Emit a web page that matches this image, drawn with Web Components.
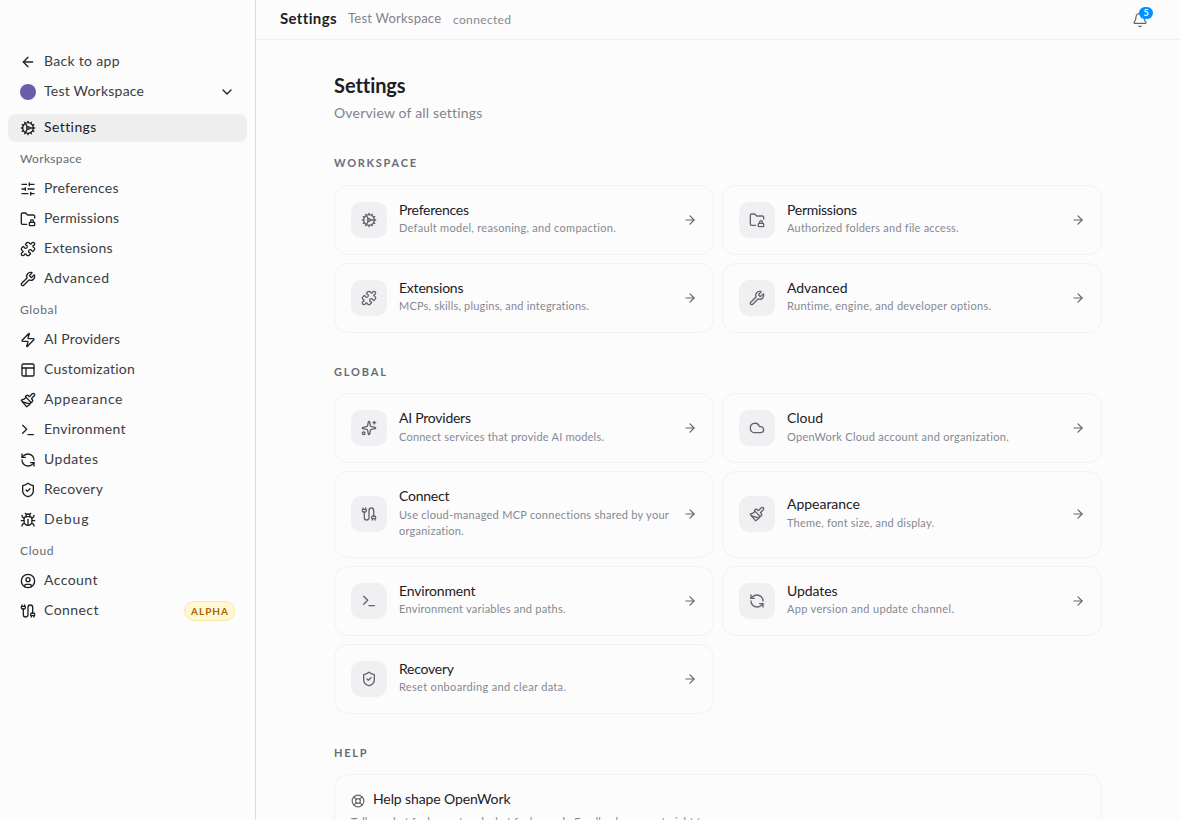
<!DOCTYPE html>
<html lang="en">
<head>
<meta charset="utf-8">
<title>Settings</title>
<style>
html,body{margin:0;height:100%;overflow:hidden;background:#fcfcfd}
body{font-family:Lato,"Open Sans",sans-serif;color:#1c2024;font-size:14px}
</style>
</head>
<body>
<settings-app></settings-app>
<script>
const P = d => d.split('|').map(x => `<path d="${x}"/>`).join('');
const C = (x, y, r) => `<circle cx="${x}" cy="${y}" r="${r}"/>`;
const ICONS = {
  left: P('m12 19-7-7 7-7|M19 12H5'),
  right: P('M5 12h14|m12 5 7 7-7 7'),
  down: P('m6 9 6 6 6-6'),
  cog: P('M11 10.27 7 3.34|m11 13.73-4 6.93|M12 22v-2|M12 2v2|M14 12h8|m17 20.66-1-1.73|m17 3.34-1 1.73|M2 12h2|m20.66 17-1.73-1|m20.66 7-1.73 1|m3.34 17 1.73-1|m3.34 7 1.73 1') + C(12,12,2) + C(12,12,8),
  sliders: P('M10 5H3|M12 19H3|M14 3v4|M16 17v4|M21 12h-9|M21 19h-5|M21 5h-7|M8 10v4|M8 12H3'),
  folder: '<rect width="8" height="5" x="14" y="17" rx="1"/>' + P('M10 20H4a2 2 0 0 1-2-2V5a2 2 0 0 1 2-2h3.9a2 2 0 0 1 1.69.9l.81 1.2a2 2 0 0 0 1.67.9H20a2 2 0 0 1 2 2v2.5|M20 17v-2a2 2 0 1 0-4 0v2'),
  puzzle: P('M15.39 4.39a1 1 0 0 0 1.68-.474 2.5 2.5 0 1 1 3.014 3.015 1 1 0 0 0-.474 1.68l1.683 1.682a2.414 2.414 0 0 1 0 3.414L19.61 15.39a1 1 0 0 1-1.68-.474 2.5 2.5 0 1 0-3.014 3.015 1 1 0 0 1 .474 1.68l-1.683 1.682a2.414 2.414 0 0 1-3.414 0L8.61 19.61a1 1 0 0 0-1.68.474 2.5 2.5 0 1 1-3.014-3.015 1 1 0 0 0 .474-1.68l-1.683-1.682a2.414 2.414 0 0 1 0-3.414L4.39 8.61a1 1 0 0 1 1.68.474 2.5 2.5 0 1 0 3.014-3.015 1 1 0 0 1-.474-1.68l1.683-1.682a2.414 2.414 0 0 1 3.414 0z'),
  wrench: P('M14.7 6.3a1 1 0 0 0 0 1.4l1.6 1.6a1 1 0 0 0 1.4 0l3.106-3.105c.32-.322.863-.22.983.218a6 6 0 0 1-8.259 7.057l-7.91 7.91a1 1 0 0 1-2.999-3l7.91-7.91a6 6 0 0 1 7.057-8.259c.438.12.54.662.219.984z'),
  zap: P('M4 14a1 1 0 0 1-.78-1.63l9.9-10.2a.5.5 0 0 1 .86.46l-1.92 6.02A1 1 0 0 0 13 10h7a1 1 0 0 1 .78 1.63l-9.9 10.2a.5.5 0 0 1-.86-.46l1.92-6.02A1 1 0 0 0 11 14z'),
  panels: '<rect width="18" height="18" x="3" y="3" rx="2"/>' + P('M3 9h18|M9 21V9'),
  brush: P('m14.622 17.897-10.68-2.913|M18.376 2.622a1 1 0 1 1 3.002 3.002L17.36 9.643a.5.5 0 0 0 0 .707l.944.944a2.41 2.41 0 0 1 0 3.408l-.944.944a.5.5 0 0 1-.707 0L8.354 7.348a.5.5 0 0 1 0-.707l.944-.944a2.41 2.41 0 0 1 3.408 0l.944.944a.5.5 0 0 0 .707 0z|M9 8c-1.804 2.71-3.97 3.46-6.583 3.948a.507.507 0 0 0-.302.819l7.32 8.883a1 1 0 0 0 1.185.204C12.735 20.405 16 16.792 16 15'),
  terminal: P('M12 19h8|m4 17 6-6-6-6'),
  refresh: P('M21 12a9 9 0 0 0-9-9 9.75 9.75 0 0 0-6.74 2.74L3 8|M3 3v5h5|M3 12a9 9 0 0 0 9 9 9.75 9.75 0 0 0 6.74-2.74L21 16|M16 16h5v5'),
  shield: P('M20 13c0 5-3.5 7.5-7.66 8.95a1 1 0 0 1-.67-.01C7.5 20.5 4 18 4 13V6a1 1 0 0 1 1-1c2 0 4.5-1.2 6.24-2.72a1.17 1.17 0 0 1 1.52 0C14.51 3.81 17 5 19 5a1 1 0 0 1 1 1z|m9 12 2 2 4-4'),
  bug: P('M12 20v-9|M14 7a4 4 0 0 1 4 4v3a6 6 0 0 1-12 0v-3a4 4 0 0 1 4-4z|M14.12 3.88 16 2|M21 21a4 4 0 0 0-3.81-4|M21 5a4 4 0 0 1-3.55 3.97|M22 13h-4|M3 21a4 4 0 0 1 3.81-4|M3 5a4 4 0 0 0 3.55 3.97|M6 13H2|m8 2 1.88 1.88|M9 7.13V6a3 3 0 1 1 6 0v1.13'),
  user: C(12,12,10) + C(12,10,3) + P('M7 20.662V19a2 2 0 0 1 2-2h6a2 2 0 0 1 2 2v1.662'),
  cable: P('M17 21v-2a1 1 0 0 1-1-1v-1a2 2 0 0 1 2-2h2a2 2 0 0 1 2 2v1a1 1 0 0 1-1 1|M19 15V6.5a1 1 0 0 0-7 0v11a1 1 0 0 1-7 0V9|M21 21v-2h-4|M3 5h4V3|M7 5a1 1 0 0 1 1 1v1a2 2 0 0 1-2 2H4a2 2 0 0 1-2-2V6a1 1 0 0 1 1-1V3'),
  sparkles: P('M11.017 2.814a1 1 0 0 1 1.966 0l1.051 5.558a2 2 0 0 0 1.594 1.594l5.558 1.051a1 1 0 0 1 0 1.966l-5.558 1.051a2 2 0 0 0-1.594 1.594l-1.051 5.558a1 1 0 0 1-1.966 0l-1.051-5.558a2 2 0 0 0-1.594-1.594l-5.558-1.051a1 1 0 0 1 0-1.966l5.558-1.051a2 2 0 0 0 1.594-1.594z|M20 2v4|M22 4h-4') + C(4,20,2),
  cloud: P('M17.5 19H9a7 7 0 1 1 6.71-9h1.79a4.5 4.5 0 1 1 0 9Z'),
  buoy: C(12,12,10) + P('m4.93 4.93 4.24 4.24|m14.83 9.17 4.24-4.24|m14.83 14.83 4.24 4.24|m9.17 14.83-4.24 4.24') + C(12,12,4),
  bell: P('M10.268 21a2 2 0 0 0 3.464 0|M3.262 15.326A1 1 0 0 0 4 17h16a1 1 0 0 0 .74-1.673C19.41 13.956 18 12.499 18 8A6 6 0 0 0 6 8c0 4.499-1.411 5.956-2.738 7.326')
};

const define = (tag, render, after) => customElements.define(tag, class extends HTMLElement {
  connectedCallback() {
    if (this.shadowRoot) return;
    this.attachShadow({ mode: 'open' }).innerHTML = render(n => this.getAttribute(n) || '', this);
    if (after) after(this);
  }
});

/* Stroke icon on a 24-unit grid. */
define('ui-icon', a => `<style>:host{display:block;flex:none;width:${a('size') || 16}px;height:${a('size') || 16}px}svg{display:block;width:100%;height:100%;fill:none;stroke:currentColor;stroke-width:${a('stroke') || 2};stroke-linecap:round;stroke-linejoin:round}</style><svg viewBox="0 0 24 24">${ICONS[a('name')]}</svg>`);

/* One line of text, tracked so that it fills the given width. */
define('fit-text', a => `<style>:host{display:block;white-space:nowrap;flex:none}span{display:inline-block}</style><span>${a('text')}</span>`, el => {
  const s = el.shadowRoot.querySelector('span'), n = el.getAttribute('text').length;
  const natural = s.getBoundingClientRect().width;
  s.style.letterSpacing = ((+el.getAttribute('width') - natural) / (n - 1)).toFixed(3) + 'px';
  s.style.marginRight = '-4px';
});

define('nav-item', a => `<style>
:host{display:flex;align-items:center;gap:8px;height:28px;padding:0 12px;border-radius:8px;color:#1c2024;box-sizing:border-box}
:host([active]){background:#eeeeef;margin-top:6px}
.t{color:#3a3d43;font-size:14px;line-height:20px;margin-top:-2px}
:host([active]) .t{color:#1c2024}
.dot{width:16px;height:16px;border-radius:50%;background:#6b5cac;flex:none}
.end{margin-left:auto;display:flex}
</style>${a('icon') ? `<ui-icon name="${a('icon')}"></ui-icon>` : '<i class="dot"></i>'}<fit-text class="t" text="${a('text')}" width="${a('w')}"></fit-text><div class="end"><slot></slot></div>`);

define('nav-label', a => `<style>:host{display:flex;align-items:center;height:28px;padding:0 12px 2px;box-sizing:border-box;margin-top:1px;color:#666a72;font-size:12px}</style><fit-text text="${a('text')}" width="${a('w')}"></fit-text>`);

define('alpha-badge', () => `<style>:host{display:flex;align-items:center;box-sizing:border-box;width:51px;height:20px;padding:0 0 1px 6px;border:1px solid #fae7a0;border-radius:10px;background:#fff8d3;color:#ab6400;font-size:10px;font-weight:700}</style><fit-text text="ALPHA" width="37"></fit-text>`);

const nav = (icon, text, w) => `<nav-item icon="${icon}" text="${text}" w="${w}"></nav-item>`;
define('side-bar', () => `<style>
:host{display:flex;flex-direction:column;gap:2px;flex:none;border-right:1px solid #dddde1;padding:48px 8px 0;box-sizing:content-box;width:239px}
</style>
${nav('left','Back to app',75.5)}
<nav-item text="Test Workspace" w="100"><ui-icon name="down"></ui-icon></nav-item>
<nav-item active icon="cog" text="Settings" w="52"></nav-item>
<nav-label text="Workspace" w="61.5"></nav-label>
${nav('sliders','Preferences',74.5)}${nav('folder','Permissions',75)}${nav('puzzle','Extensions',68.5)}${nav('wrench','Advanced',65)}
<nav-label text="Global" w="37"></nav-label>
${nav('zap','AI Providers',76)}${nav('panels','Customization',91)}${nav('brush','Appearance',78.5)}${nav('terminal','Environment',81.5)}${nav('refresh','Updates',54)}${nav('shield','Recovery',59)}${nav('bug','Debug',44.5)}
<nav-label text="Cloud" w="33.5"></nav-label>
${nav('user','Account',53.5)}
<nav-item icon="cable" text="Connect" w="54.5"><alpha-badge></alpha-badge></nav-item>`);

define('top-bar', () => `<style>
:host{display:flex;align-items:center;height:39px;border-bottom:1px solid #f0f0f3;padding:0 32px 0 24px;flex:none}
.a{font-size:15px;font-weight:700;width:56px;margin:-3px 12px 0 0}
.b{font-size:13px;color:#7f838c;width:93px;margin:-3px 12px 0 0}
.c{font-size:12px;color:#858891;margin-top:-1px}
.bell{margin-left:auto;position:relative;color:#60646c}
.n{position:absolute;left:7px;top:-5px;width:14px;height:12px;border-radius:6px;background:#0090ff;color:#fff;font-size:9px;font-weight:700;line-height:12px;text-align:center}
</style><fit-text class="a" text="Settings" width="56"></fit-text><fit-text class="b" text="Test Workspace" width="93"></fit-text><fit-text class="c" text="connected" width="58"></fit-text><div class="bell"><ui-icon name="bell" stroke="1.8"></ui-icon><span class="n">5</span></div>`);

define('option-card', a => `<style>
:host{display:flex;align-items:center;gap:12px;box-sizing:border-box;padding:16px;border:1px solid #f2f2f5;border-radius:14px}
.tile{width:36px;height:36px;border-radius:10px;background:#f0f0f3;color:#60646c;display:grid;place-items:center;flex:none}
.body{flex:1;min-width:0;display:flex;flex-direction:column}
.t{font-size:14px;line-height:19.5px;margin:-2px 0 var(--title-gap,1px)}
.body::after{content:"";height:calc(2px - var(--title-gap,1px))}
.s{font-size:11px;line-height:16.5px;color:#858891}
.go{color:#60646c}
</style><div class="tile"><ui-icon name="${a('icon')}"></ui-icon></div><div class="body"><fit-text class="t" text="${a('text')}" width="${a('w')}"></fit-text>${a('sub').split('|').map((s, i) => `<fit-text class="s" text="${s}" width="${a('sw').split('|')[i]}"></fit-text>`).join('')}</div><ui-icon class="go" name="right" size="14"></ui-icon>`);

define('help-card', () => `<style>
:host{display:block;box-sizing:border-box;height:110px;padding:16px;border:1px solid #f2f2f5;border-radius:14px}
.h{display:flex;align-items:center;gap:8px;height:18px;color:#60646c}
.h ui-icon{margin-top:2px}
.t{color:#1c2024;font-size:14px;margin-top:-2px}
.s{font-size:11px;line-height:16px;margin-top:5px;color:#858891}
</style><div class="h"><ui-icon name="buoy" size="14"></ui-icon><fit-text class="t" text="Help shape OpenWork" width="137.5"></fit-text></div><fit-text class="s" text="Tell us what feels great and what feels rough. Feedback opens straight to" width="356"></fit-text>`);

define('card-section', a => `<style>
:host{display:block;margin-bottom:30px}
.h{font-size:11px;font-weight:700;line-height:17px;color:#686c74;margin-bottom:var(--head-gap,13px)}
.g{display:grid;grid-template-columns:repeat(${a('cols') || 2},1fr);gap:8px}
</style><fit-text class="h" text="${a('text')}" width="${a('w')}"></fit-text><div class="g"><slot></slot></div>`);

const card = (icon, text, w, sub, sw) => `<option-card icon="${icon}" text="${text}" w="${w}" sub="${sub}" sw="${sw}"></option-card>`;
define('settings-page', () => `<style>
:host{display:block;width:768px;margin:0 auto;padding-top:31px}
.h1{font-size:20px;font-weight:700;line-height:28px}
.p{font-size:14px;line-height:20px;color:#7f838c;margin:4px 0 31px}
.first{--title-gap:0px;--head-gap:14px}
</style>
<fit-text class="h1" text="Settings" width="71"></fit-text>
<fit-text class="p" text="Overview of all settings" width="148"></fit-text>
<card-section class="first" text="WORKSPACE" w="82">
${card('cog','Preferences',70,'Default model, reasoning, and compaction.',217)}
${card('folder','Permissions',70,'Authorized folders and file access.',171.5)}
${card('puzzle','Extensions',64.5,'MCPs, skills, plugins, and integrations.',190)}
${card('wrench','Advanced',60.5,'Runtime, engine, and developer options.',204.5)}
</card-section>
<card-section text="GLOBAL" w="52">
${card('sparkles','AI Providers',72,'Connect services that provide AI models.',205)}
${card('cloud','Cloud',36,'OpenWork Cloud account and organization.',222)}
${card('cable','Connect',50.5,'Use cloud-managed MCP connections shared by your|organization.','270|65')}
${card('brush','Appearance',73,'Theme, font size, and display.',147)}
${card('terminal','Environment',76.5,'Environment variables and paths.',166.5)}
${card('refresh','Updates',50.5,'App version and update channel.',167)}
${card('shield','Recovery',55,'Reset onboarding and clear data.',167)}
</card-section>
<card-section text="HELP" w="32.5" cols="1"><help-card></help-card></card-section>`);

define('settings-app', () => `<style>
:host{display:flex;height:820px;overflow:hidden}
main{flex:1;min-width:0;display:flex;flex-direction:column;overflow:hidden}
</style><side-bar></side-bar><main><top-bar></top-bar><settings-page></settings-page></main>`);
</script>
</body>
</html>
